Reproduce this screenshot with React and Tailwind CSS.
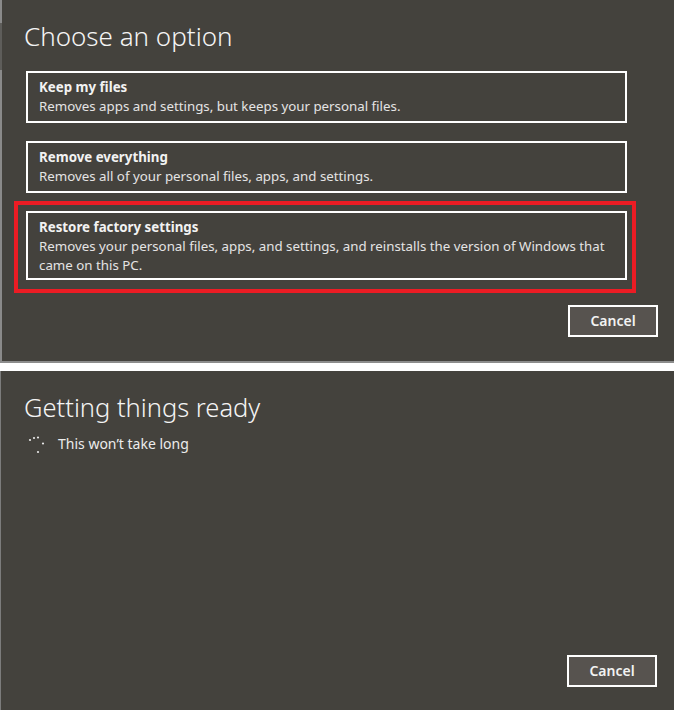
import React from "react";

const font = { fontFamily: '"Segoe UI", "Noto Sans", "Open Sans", sans-serif' };

function Option({ title, desc, pb = "pb-[5px]" }) {
  return (
    <div className={`w-[601px] border-2 border-white px-[11px] pt-[5px] ${pb}`}>
      <div className="text-[13.3px] leading-[19px] font-bold text-[#f2f2f2]">{title}</div>
      <div className="text-[13.3px] leading-[19px] text-[#e4e4e4]">{desc}</div>
    </div>
  );
}

function CancelButton() {
  return (
    <button className="w-[90px] h-[32px] border-2 border-white bg-[#57534f] text-[14px] font-semibold text-[#f2f2f2] leading-none">
      Cancel
    </button>
  );
}

function Spinner() {
  return (
    <svg width="20" height="20" viewBox="0 0 20 20" className="block">
      <circle cx="4" cy="6" r="1.1" fill="#e8e8e8" />
      <circle cx="8" cy="4" r="1.1" fill="#e8e8e8" />
      <circle cx="12" cy="3.5" r="1.1" fill="#e8e8e8" />
      <circle cx="17" cy="9.5" r="1.1" fill="#e8e8e8" />
      <circle cx="12" cy="18" r="1.1" fill="#e8e8e8" />
    </svg>
  );
}

export default function App() {
  return (
    <div className="w-[674px] h-[710px] bg-white flex flex-col overflow-hidden" style={font}>
      <div className="h-[363px] bg-[#44423d] border-b-2 border-[#8c8c8c] flex">
        <div className="w-[2px] flex flex-col shrink-0">
          <div className="h-[23px] bg-[#8a8a8a]" />
          <div className="h-[47px] bg-[#5e5d5a]" />
          <div className="flex-1 bg-[#8a8a8a]" />
        </div>
        <div className="flex-1 flex flex-col">
          <div className="pl-[22px] pt-[20px] text-[26px] leading-[32px] font-light text-[#f4f4f4]">
            Choose an option
          </div>
          <div className="mt-[19px] ml-[24px] flex flex-col gap-[18px]">
            <Option title="Keep my files" desc="Removes apps and settings, but keeps your personal files." />
            <Option title="Remove everything" desc="Removes all of your personal files, apps, and settings." />
          </div>
          <div className="mt-[8px] ml-[12px] w-[622px] border-4 border-[#ec1c24] pl-[8px] pt-[6px] pr-[5px] pb-[9px]">
            <Option
              title="Restore factory settings"
              desc="Removes your personal files, apps, and settings, and reinstalls the version of Windows that came on this PC."
              pb="pb-[3px]"
            />
          </div>
          <div className="mt-[12px] ml-[566px]">
            <CancelButton />
          </div>
        </div>
      </div>
      <div className="h-[8px] bg-white" />
      <div className="flex-1 bg-[#44423d] border-l border-[#7c7c7c] flex flex-col">
        <div className="pl-[23px] pt-[20px] text-[25.5px] leading-[32px] font-light text-[#f4f4f4]">
          Getting things ready
        </div>
        <div className="mt-[10px] pl-[25px] flex items-center gap-[12px]">
          <Spinner />
          <span className="text-[14px] text-[#ececec]">This won’t take long</span>
        </div>
        <div className="flex-1" />
        <div className="pl-[566px] pb-[23px]">
          <CancelButton />
        </div>
      </div>
    </div>
  );
}
